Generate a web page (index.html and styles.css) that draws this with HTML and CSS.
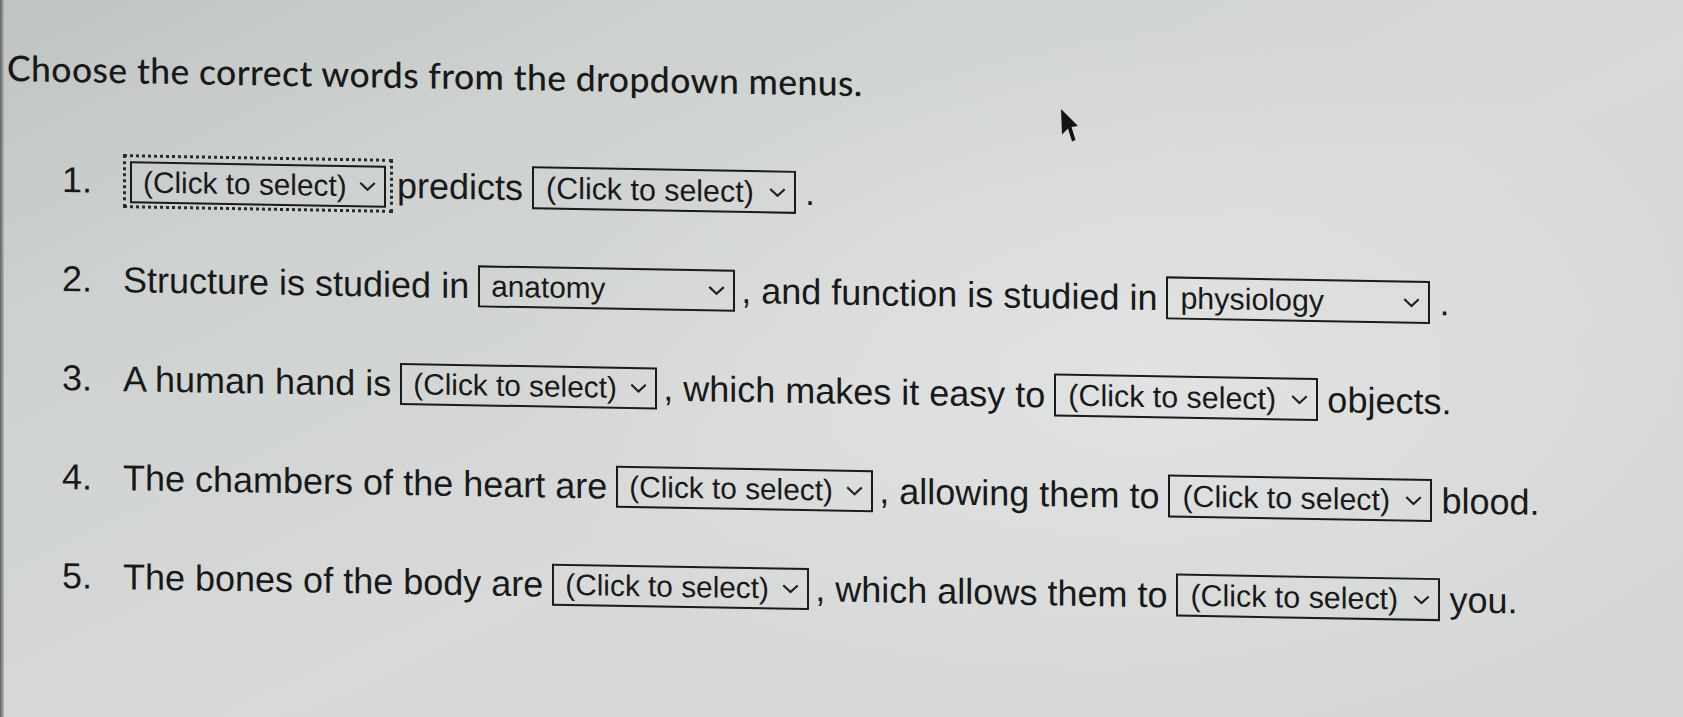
FILE: index.html
```html
<!DOCTYPE html>
<html lang="en">
<head>
<meta charset="utf-8">
<title>Choose the correct words</title>
<link rel="stylesheet" href="styles.css">
</head>
<body>
<div class="page">
  <div class="bezel"></div>
  <div class="content">
    <h1 class="title">Choose the correct words from the dropdown menus.</h1>
    <ol class="items">
      <li class="item">
        <span class="num">1.</span>
        <span class="focus"><span class="sel"><span class="val">(Click to select)</span><svg class="chev" viewBox="0 0 16 9"><polyline points="1.2,1.2 8,7.6 14.8,1.2"/></svg></span></span>
        <span class="txt">predicts</span>
        <span class="sel far"><span class="val">(Click to select)</span><svg class="chev" viewBox="0 0 16 9"><polyline points="1.2,1.2 8,7.6 14.8,1.2"/></svg></span>
        <span class="txt sp">.</span>
      </li>
      <li class="item">
        <span class="num">2.</span>
        <span class="txt">Structure is studied in</span>
        <span class="sel"><span class="val">anatomy</span><svg class="chev" viewBox="0 0 16 9"><polyline points="1.2,1.2 8,7.6 14.8,1.2"/></svg></span>
        <span class="txt">, and function is studied in</span>
        <span class="sel far"><span class="val">physiology</span><svg class="chev" viewBox="0 0 16 9"><polyline points="1.2,1.2 8,7.6 14.8,1.2"/></svg></span>
        <span class="txt sp">.</span>
      </li>
      <li class="item">
        <span class="num">3.</span>
        <span class="txt">A human hand is</span>
        <span class="sel"><span class="val">(Click to select)</span><svg class="chev" viewBox="0 0 16 9"><polyline points="1.2,1.2 8,7.6 14.8,1.2"/></svg></span>
        <span class="txt">, which makes it easy to</span>
        <span class="sel far"><span class="val">(Click to select)</span><svg class="chev" viewBox="0 0 16 9"><polyline points="1.2,1.2 8,7.6 14.8,1.2"/></svg></span>
        <span class="txt sp">objects.</span>
      </li>
      <li class="item">
        <span class="num">4.</span>
        <span class="txt">The chambers of the heart are</span>
        <span class="sel"><span class="val">(Click to select)</span><svg class="chev" viewBox="0 0 16 9"><polyline points="1.2,1.2 8,7.6 14.8,1.2"/></svg></span>
        <span class="txt">, allowing them to</span>
        <span class="sel far"><span class="val">(Click to select)</span><svg class="chev" viewBox="0 0 16 9"><polyline points="1.2,1.2 8,7.6 14.8,1.2"/></svg></span>
        <span class="txt sp">blood.</span>
      </li>
      <li class="item">
        <span class="num">5.</span>
        <span class="txt">The bones of the body are</span>
        <span class="sel"><span class="val">(Click to select)</span><svg class="chev" viewBox="0 0 16 9"><polyline points="1.2,1.2 8,7.6 14.8,1.2"/></svg></span>
        <span class="txt">, which allows them to</span>
        <span class="sel far"><span class="val">(Click to select)</span><svg class="chev" viewBox="0 0 16 9"><polyline points="1.2,1.2 8,7.6 14.8,1.2"/></svg></span>
        <span class="txt sp">you.</span>
      </li>
    </ol>
  </div>
  <svg class="cursor" viewBox="0 0 19 35"><path d="M1 1 L2 26.5 L8 20.5 L12 33.5 L15.5 32 L11.5 19 L18 18 Z"/></svg>
</div>
</body>
</html>
```
FILE: styles.css
```css
html, body {
  margin: 0;
  padding: 0;
}
body {
  width: 1683px;
  height: 717px;
  overflow: hidden;
  font-family: "Liberation Sans", Arial, sans-serif;
  color: #19191a;
}
.page {
  position: relative;
  width: 1683px;
  height: 717px;
  background:
    radial-gradient(ellipse 900px 500px at 1150px 380px, rgba(225,228,227,0.9), rgba(225,228,227,0) 70%),
    linear-gradient(155deg, #bfc3c2 0%, #cdd1d0 22%, #d7dad9 55%, #d3d6d5 100%);
  overflow: hidden;
}
.bezel {
  position: absolute;
  left: 0;
  top: 0;
  width: 4px;
  height: 717px;
  background: linear-gradient(90deg, #5f6262, #b3b6b5);
}
.content {
  padding: 46px 0 0 7px;
  transform-origin: 0 0;
  transform: skewY(1deg);
}
.title {
  margin: 0;
  font-family: "Lato", "Open Sans", sans-serif;
  font-size: 35.5px;
  line-height: 44px;
  font-weight: 500;
  letter-spacing: 0.4px;
}
.items {
  list-style: none;
  margin: 39px 0 0 0;
  padding: 0;
}
.item {
  display: flex;
  align-items: center;
  height: 99px;
  font-size: 36px;
}
.num {
  width: 61px;
  margin-left: 55px;
  flex: none;
}
.txt {
  white-space: pre;
  flex: none;
}
.sp {
  margin-left: 3px;
}
.sel {
  display: inline-flex;
  align-items: center;
  justify-content: space-between;
  box-sizing: border-box;
  width: 257px;
  height: 42px;
  border: 2px solid #1a1b1b;
  padding: 0 8px 0 11px;
  margin: 0 6px 0 9px;
  font-size: 29.8px;
  flex: none;
}
.sel.far {
  width: 264px;
  height: 43px;
  padding-left: 12px;
  font-size: 30.4px;
}
.focus {
  display: inline-flex;
  padding: 4px 4px 2px 4px;
  border: 3px dotted #2a2b2c;
  margin: 0 4px 0 0;
  flex: none;
}
.focus .sel {
  width: 256px;
  margin: 0;
}
.val {
  white-space: nowrap;
}
.chev {
  width: 17px;
  height: 10px;
  flex: none;
}
.chev polyline {
  fill: none;
  stroke: #1e1f1f;
  stroke-width: 2;
}
.cursor {
  position: absolute;
  left: 1060px;
  top: 108px;
  width: 19px;
  height: 35px;
}
.cursor path {
  fill: #121313;
}
```
